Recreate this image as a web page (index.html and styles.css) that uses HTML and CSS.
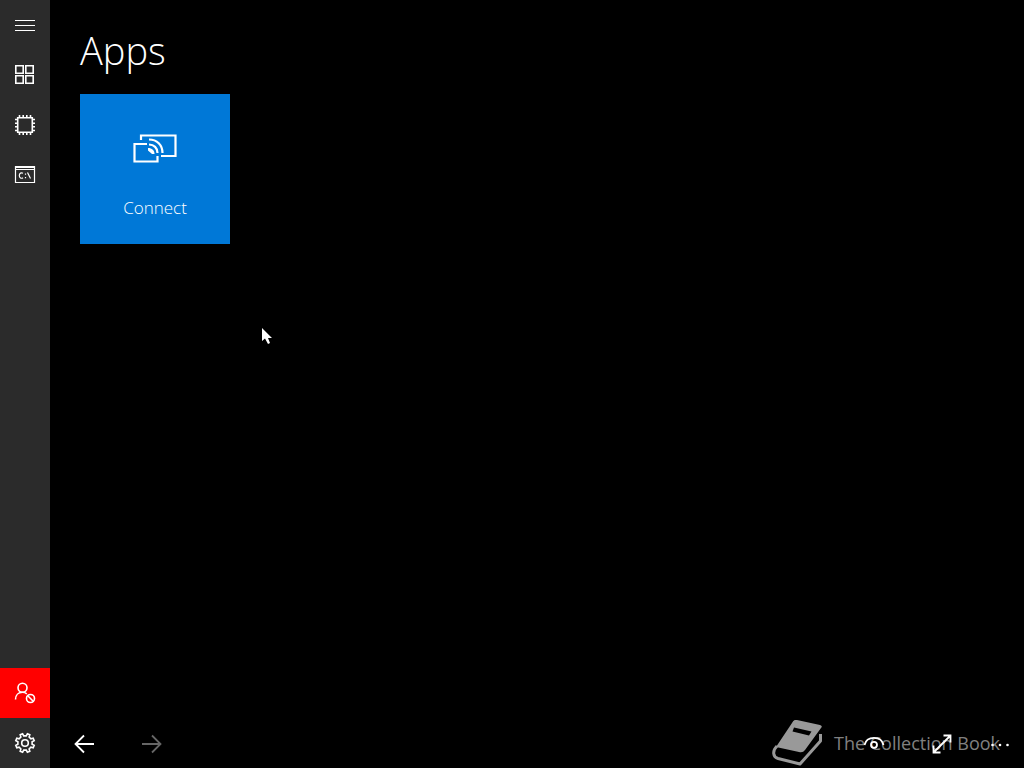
FILE: index.html
```html
<!DOCTYPE html>
<html lang="en">
<head>
    <meta charset="UTF-8">
    <meta name="viewport" content="width=device-width, initial-scale=1.0">
    <title>Apps</title>
    <link rel="stylesheet" href="styles.css">
</head>
<body>
    <nav class="sidebar">
        <button class="side-btn" aria-label="Menu">
            <svg class="icon" viewBox="0 0 24 24"><path d="M2 7.5h20M2 12.5h20M2 17.5h20"/></svg>
        </button>
        <button class="side-btn" aria-label="Apps">
            <svg class="icon bold" viewBox="0 0 24 24"><path d="M2.8 2.8h7.4v7.4H2.8zM12.8 2.8h7.4v7.4h-7.4zM2.8 12.8h7.4v7.4H2.8zM12.8 12.8h7.4v7.4h-7.4z"/></svg>
        </button>
        <button class="side-btn" aria-label="Processes">
            <svg class="icon bold" viewBox="0 0 24 24"><path d="M4.7 4.7h14.6v14.6H4.7zM6.5 2v3M10.2 2v3M13.8 2v3M17.5 2v3M6.5 19v3M10.2 19v3M13.8 19v3M17.5 19v3M2 6.5h3M2 10.2h3M2 13.8h3M2 17.5h3M19 6.5h3M19 10.2h3M19 13.8h3M19 17.5h3"/></svg>
        </button>
        <button class="side-btn" aria-label="Command prompt">
            <svg class="icon prompt" viewBox="0 0 24 24"><path d="M2.5 3.5h19v16h-19zM2.5 4.5h19M2.5 6.5h19M10 10.2C8.3 9.3 6.3 10.1 6.3 12.5s2 3.300 3.700 2.400M12.5 10.5v1.200M12.5 14v1.200M14.5 9.500l3 6"/></svg>
        </button>
        <button class="side-btn alert" aria-label="Sign in">
            <svg class="icon bold" viewBox="0 0 24 24"><circle cx="9.500" cy="6.800" r="4.500"/><path d="M2.500 18.500c0-4.500 3-7.200 7-7.200 1.800 0 3.200.6 4.300 1.500"/><circle cx="17.500" cy="17.500" r="4"/><path d="M14.800 14.800l5.400 5.400"/></svg>
        </button>
        <button class="side-btn" aria-label="Settings">
            <svg class="icon bold" viewBox="-12 -12 24 24"><path d="M7.100 1.250L9.200 2.400 8.200 4.800 5.900 4.130 4.130 5.900 4.800 8.200 2.400 9.200 1.250 7.100-1.250 7.100-2.400 9.200-4.800 8.200-4.130 5.900-5.900 4.130-8.200 4.800-9.200 2.400-7.100 1.250-7.100-1.250-9.200-2.400-8.200-4.800-5.900-4.130-4.130-5.900-4.800-8.200-2.400-9.200-1.250-7.100 1.250-7.100 2.400-9.200 4.800-8.200 4.130-5.900 5.900-4.130 8.200-4.800 9.200-2.400 7.100-1.250z"/><circle r="3.300"/></svg>
        </button>
    </nav>

    <main class="content">
        <h1>Apps</h1>
        <div class="tiles">
            <button class="tile">
                <svg class="tile-icon" viewBox="0 0 44 30"><path d="M8 6V1.500h34.500V22H28M14 10H1.500v17.500h23V22"/><path d="M16 5.500c8 0 13.500 5.500 13.500 13.500M16 10.500c5 0 8.500 3.500 8.500 8.500"/><path class="solid" d="M15 14c4 0 6.500 2.500 6.500 6h-2.500l-4-3.500z"/></svg>
                <span>Connect</span>
            </button>
        </div>

        <footer class="bottom-bar">
            <button class="bar-btn" aria-label="Back">
                <svg class="icon arrow" viewBox="0 0 24 24"><path d="M22 12H3.500M12 3.500L3.500 12l8.500 8.500"/></svg>
            </button>
            <button class="bar-btn" aria-label="Forward" disabled>
                <svg class="icon arrow" viewBox="0 0 24 24"><path d="M2 12h18.500M12 3.500l8.500 8.500-8.500 8.500"/></svg>
            </button>
            <button class="bar-btn view" aria-label="View">
                <svg class="icon arrow" viewBox="0 0 24 24"><path d="M2.500 13C3.500 8.500 7 5.800 12 5.800s8.500 2.700 9.500 7.200"/><circle cx="12" cy="12.800" r="3"/></svg>
            </button>
            <button class="bar-btn" aria-label="Full screen">
                <svg class="icon arrow" viewBox="0 0 24 24"><path d="M3.500 20.500l17-17M13.500 3.500h7v7M3.500 13.500v7h7"/></svg>
            </button>
            <button class="bar-btn more" aria-label="More">
                <svg class="icon dots" viewBox="0 0 24 24"><circle cx="4.500" cy="13" r="1.300"/><circle cx="12" cy="13" r="1.300"/><circle cx="19.500" cy="13" r="1.300"/></svg>
            </button>
        </footer>
    </main>

    <div class="watermark">
        <svg class="book" viewBox="0 0 50 46"><path fill-rule="evenodd" d="M25 0L48 5Q51 6 49 8L33 30Q31 33 27 32L4 27 20 3Q22-1 25 0zM22 7.500L20.500 11.500 37 15.500 39.500 11.500z"/><path class="cover" d="M5 26C0 31 1 37 6 38.500L28 44 48.500 21V14"/></svg>
        <span>The Collection Book</span>
    </div>

    <svg class="cursor" viewBox="0 0 12 18"><path d="M0 0v13l3-2.500 3 5.500 2-1-2-5h4z"/></svg>
</body>
</html>
```

FILE: styles.css
```css
* {
    box-sizing: border-box;
}

body {
    margin: 0;
    min-height: 100vh;
    display: flex;
    background: #000;
    color: #fff;
    font-family: "Open Sans", "Noto Sans", sans-serif;
    font-weight: 300;
    overflow: hidden;
}

button {
    border: none;
    padding: 0;
    margin: 0;
    background: none;
    color: inherit;
    font: inherit;
}

/* Sidebar */
.sidebar {
    width: 50px;
    flex-shrink: 0;
    display: flex;
    flex-direction: column;
    background: #2b2b2b;
}

.side-btn {
    height: 50px;
    display: flex;
    align-items: center;
    justify-content: center;
}

.alert {
    margin-top: auto;
    background: #f00;
}

.icon {
    width: 24px;
    height: 24px;
    fill: none;
    stroke: #fff;
    stroke-width: 1;
}

.bold {
    stroke-width: 1.6;
}

.prompt {
    stroke-width: 1.2;
}

/* Content */
.content {
    flex: 1;
    display: flex;
    flex-direction: column;
    padding-top: 24px;
    position: relative;
    z-index: 1;
}

h1 {
    margin: 0 30px 18px;
    font-size: 38px;
    line-height: 52px;
    font-weight: 300;
}

.tiles {
    display: flex;
    flex-wrap: wrap;
    gap: 10px;
    padding: 0 30px;
}

.tile {
    width: 150px;
    height: 150px;
    padding: 40px 0 24px;
    display: flex;
    flex-direction: column;
    align-items: center;
    justify-content: space-between;
    background: #0078d7;
    font-size: 17px;
    line-height: 24px;
}

.tile-icon {
    width: 44px;
    height: 30px;
    fill: none;
    stroke: #fff;
    stroke-width: 2.2;
}

.tile-icon .solid {
    fill: #fff;
    stroke: none;
}

/* Bottom bar */
.bottom-bar {
    margin-top: auto;
    display: flex;
    height: 48px;
}

.bar-btn {
    width: 68px;
    display: flex;
    align-items: center;
    justify-content: center;
}

.bar-btn:disabled {
    opacity: 0.4;
}

.arrow {
    stroke-width: 1.8;
}

.view {
    margin-left: auto;
}

.more {
    width: 48px;
}

.dots {
    fill: #fff;
    stroke: none;
}

.watermark {
    position: absolute;
    right: 24px;
    bottom: 2px;
    display: flex;
    align-items: center;
    gap: 12px;
    color: #808080;
    font-size: 18px;
    font-weight: 400;
}

.book {
    width: 50px;
    height: 46px;
    fill: #999;
}

.cover {
    fill: none;
    stroke: #999;
    stroke-width: 3;
    stroke-linejoin: round;
}

.cursor {
    position: absolute;
    z-index: 2;
    left: 262px;
    top: 328px;
    width: 12px;
    height: 18px;
    fill: #fff;
}
```
